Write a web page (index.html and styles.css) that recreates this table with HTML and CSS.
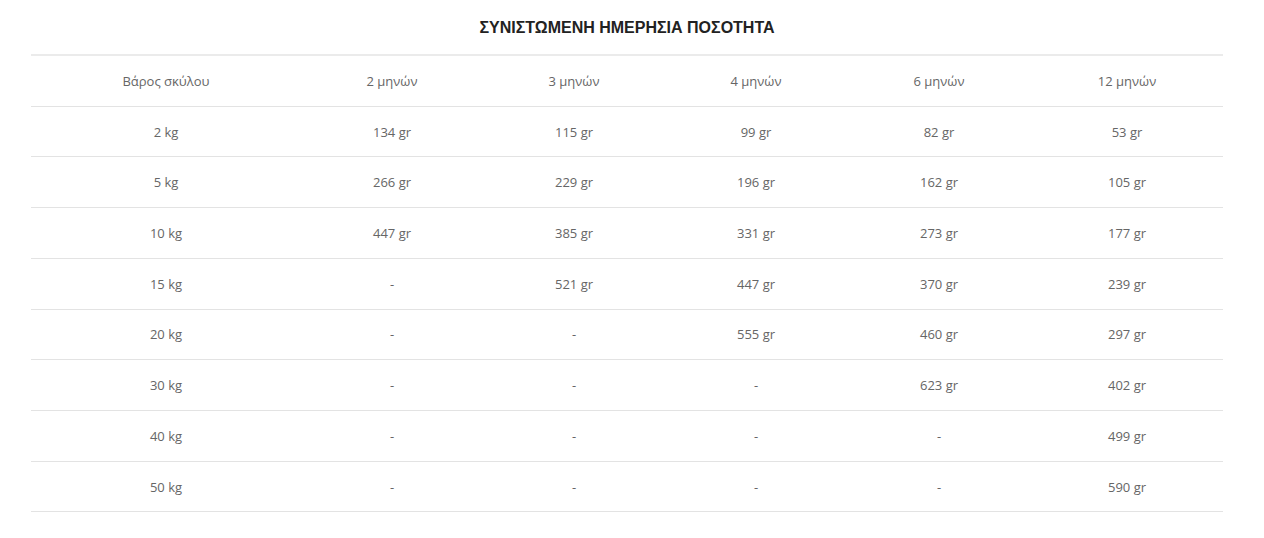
FILE: index.html
```html
<!DOCTYPE html>
<html lang="el">
<head>
<meta charset="utf-8">
<link rel="stylesheet" href="styles.css">
</head>
<body>
<div class="wrap">
  <h2 class="title">ΣΥΝΙΣΤΩΜΕΝΗ ΗΜΕΡΗΣΙΑ ΠΟΣΟΤΗΤΑ</h2>
  <table class="dose">
    <colgroup>
      <col class="c1"><col class="c2"><col class="c3"><col class="c4"><col class="c5"><col class="c6">
    </colgroup>
    <thead>
      <tr><th>Βάρος σκύλου</th><th>2 μηνών</th><th>3 μηνών</th><th>4 μηνών</th><th>6 μηνών</th><th>12 μηνών</th></tr>
    </thead>
    <tbody>
      <tr><td>2 kg</td><td>134 gr</td><td>115 gr</td><td>99 gr</td><td>82 gr</td><td>53 gr</td></tr>
      <tr><td>5 kg</td><td>266 gr</td><td>229 gr</td><td>196 gr</td><td>162 gr</td><td>105 gr</td></tr>
      <tr><td>10 kg</td><td>447 gr</td><td>385 gr</td><td>331 gr</td><td>273 gr</td><td>177 gr</td></tr>
      <tr><td>15 kg</td><td>-</td><td>521 gr</td><td>447 gr</td><td>370 gr</td><td>239 gr</td></tr>
      <tr><td>20 kg</td><td>-</td><td>-</td><td>555 gr</td><td>460 gr</td><td>297 gr</td></tr>
      <tr><td>30 kg</td><td>-</td><td>-</td><td>-</td><td>623 gr</td><td>402 gr</td></tr>
      <tr><td>40 kg</td><td>-</td><td>-</td><td>-</td><td>-</td><td>499 gr</td></tr>
      <tr><td>50 kg</td><td>-</td><td>-</td><td>-</td><td>-</td><td>590 gr</td></tr>
    </tbody>
  </table>
</div>
</body>
</html>
```
FILE: styles.css
```css
html, body {
  margin: 0;
  padding: 0;
  background: #ffffff;
}
.wrap {
  width: 1192px;
  margin-left: 31px;
  padding-top: 18px;
}
.title {
  margin: 0;
  height: 36px;
  font-family: "Liberation Sans", Arial, sans-serif;
  font-size: 16px;
  font-weight: bold;
  color: #222222;
  text-align: center;
  line-height: 20px;
}
.dose {
  width: 1192px;
  border-collapse: collapse;
  table-layout: fixed;
  border-top: 2px solid #ebebeb;
  font-family: "Open Sans", "Noto Sans", sans-serif;
  font-size: 13px;
  color: #666666;
}
.c1 { width: 270px; }
.c2 { width: 182px; }
.c3 { width: 182px; }
.c4 { width: 182px; }
.c5 { width: 184px; }
.c6 { width: 192px; }
.dose th,
.dose td {
  height: 49.72px;
  padding: 0;
  text-align: center;
  vertical-align: middle;
  font-weight: normal;
  border-bottom: 1px solid #e3e3e3;
}
```
